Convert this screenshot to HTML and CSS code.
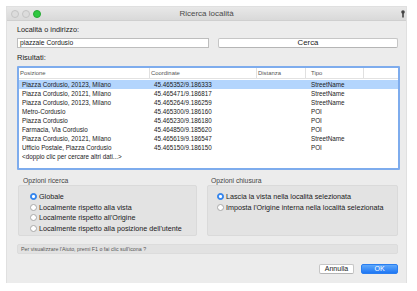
FILE: index.html
```html
<!DOCTYPE html>
<html lang="it">
<head>
    <meta charset="UTF-8">
    <meta name="viewport" content="width=device-width, initial-scale=1.0">
    <title>Ricerca località</title>
    <link rel="stylesheet" href="styles.css">
</head>
<body>

<div class="window">
    <div class="title-bar">
        <div class="lights">
            <span class="light"></span>
            <span class="light"></span>
            <span class="light green"></span>
        </div>
        <div class="title">Ricerca località</div>
        <div class="help-icon">
            <svg width="4" height="8" viewBox="0 0 4 8"><circle cx="2" cy="2" r="1.8" fill="#444"/><rect x="1.2" y="3" width="1.6" height="4.5" fill="#444"/></svg>
        </div>
    </div>

    <div class="content">
        <div class="label">Località o indirizzo:</div>
        <div class="search-row">
            <div class="input">piazzale Cordusio</div>
            <div class="button wide">Cerca</div>
        </div>

        <div class="label results-label">Risultati:</div>
        <div class="results">
            <div class="row head">
                <span>Posizione</span>
                <span>Coordinate</span>
                <span>Distanza</span>
                <span class="tipo">Tipo</span>
                <span></span>
            </div>
            <div class="rows">
                <div class="row selected"><span>Piazza Cordusio, 20123, Milano</span><span>45.465352/9.186333</span><span></span><span>StreetName</span></div>
                <div class="row"><span>Piazza Cordusio, 20121, Milano</span><span>45.465471/9.186817</span><span></span><span>StreetName</span></div>
                <div class="row"><span>Piazza Cordusio, 20123, Milano</span><span>45.465264/9.186259</span><span></span><span>StreetName</span></div>
                <div class="row"><span>Metro-Cordusio</span><span>45.465300/9.186160</span><span></span><span>POI</span></div>
                <div class="row"><span>Piazza Cordusio</span><span>45.465230/9.186180</span><span></span><span>POI</span></div>
                <div class="row"><span>Farmacia, Via Cordusio</span><span>45.464850/9.185620</span><span></span><span>POI</span></div>
                <div class="row"><span>Piazza Cordusio, 20121, Milano</span><span>45.465619/9.186547</span><span></span><span>StreetName</span></div>
                <div class="row"><span>Ufficio Postale, Piazza Cordusio</span><span>45.465150/9.186150</span><span></span><span>POI</span></div>
                <div class="row"><span>&lt;doppio clic per cercare altri dati...&gt;</span></div>
            </div>
        </div>

        <div class="options">
            <div class="group left">
                <div class="group-label">Opzioni ricerca</div>
                <div class="group-box">
                    <div class="radio-row"><span class="radio on"></span>Globale</div>
                    <div class="radio-row"><span class="radio"></span>Localmente rispetto alla vista</div>
                    <div class="radio-row"><span class="radio"></span>Localmente rispetto all'Origine</div>
                    <div class="radio-row"><span class="radio"></span>Localmente rispetto alla posizione dell'utente</div>
                </div>
            </div>
            <div class="group right">
                <div class="group-label">Opzioni chiusura</div>
                <div class="group-box">
                    <div class="radio-row"><span class="radio on"></span>Lascia la vista nella località selezionata</div>
                    <div class="radio-row"><span class="radio"></span>Imposta l'Origine interna nella località selezionata</div>
                </div>
            </div>
        </div>

        <div class="help-bar">Per visualizzare l'Aiuto, premi F1 o fai clic sull'icona ?</div>

        <div class="actions">
            <div class="button">Annulla</div>
            <div class="button primary">OK</div>
        </div>
    </div>
</div>

</body>
</html>
```

FILE: styles.css
```css
body {
    font-family: 'Liberation Sans', Arial, sans-serif;
    background-color: white;
    margin: 0;
    padding: 0;
    color: #222;
}

.window {
    margin: 7px 0 0 7px;
    width: 399px;
    height: 276px;
    background-color: #ececec;
    box-shadow: 0 0 0 1px rgba(0, 0, 0, 0.12);
}

/* Title bar */
.title-bar {
    height: 14px;
    display: grid;
    grid-template-columns: 1fr auto 1fr;
    align-items: center;
    background: linear-gradient(#e8e8e8, #d9d9d9);
    border-bottom: 1px solid #cfcfcf;
    box-sizing: border-box;
}

.lights {
    display: flex;
    gap: 3px;
    padding-left: 4px;
}

.light {
    width: 6px;
    height: 6px;
    border-radius: 50%;
    background-color: #dcdcdc;
    border: 0.5px solid #c4c4c4;
}

.light.green {
    background-color: #2fc840;
    border-color: #27a834;
}

.title {
    font-size: 8px;
    color: #4a4a4a;
}

.help-icon {
    justify-self: end;
    padding-right: 1px;
    display: flex;
}

/* Content */
.content {
    padding: 4px 8px 0 10px;
}

.label {
    font-size: 7.3px;
    line-height: 9px;
    color: #222;
}

.search-row {
    display: flex;
    gap: 9px;
    margin-top: 4px;
    height: 10px;
}

.input {
    width: 192px;
    box-sizing: border-box;
    background-color: white;
    border: 1px solid #bdbdbd;
    font-size: 6.7px;
    line-height: 8px;
    padding-left: 2px;
}

.button {
    box-sizing: border-box;
    background-color: white;
    border: 1px solid #c6c6c6;
    border-bottom-color: #b5b5b5;
    border-radius: 2px;
    font-size: 7px;
    line-height: 8px;
    text-align: center;
    height: 10px;
}

.button.wide {
    flex: 1;
    font-size: 7.8px;
}

.results-label {
    margin-top: 5px;
    font-size: 7.5px;
}

/* Results table */
.results {
    margin-top: 4px;
    margin-right: -2px;
    height: 104px;
    box-sizing: border-box;
    background-color: white;
    border: 2px solid #7eaced;
    border-radius: 1px;
}

.row {
    display: grid;
    grid-template-columns: 131px 107px 49px 58px 1fr;
    height: 9px;
    font-size: 6.3px;
    line-height: 9px;
    color: #1a1a1a;
    white-space: nowrap;
}

.row span {
    padding-left: 3px;
    overflow: hidden;
}

.row span:nth-child(2) {
    padding-left: 4px;
}

.row span:nth-child(4) {
    padding-left: 5px;
}

.row.head {
    height: 11px;
    line-height: 10px;
    font-size: 5.9px;
    color: #555;
    border-bottom: 1px solid #e2e2e2;
    box-sizing: border-box;
}

.row.head span {
    padding-left: 1px;
    border-right: 1px solid #e0e0e0;
}

.row.head span:nth-child(4) {
    padding-left: 5px;
}

.row.head span:last-child {
    border-right: none;
}

.rows {
    padding-top: 1px;
}

.row.selected {
    background-color: #b3d5fd;
}

/* Options */
.options {
    display: flex;
    gap: 10px;
    margin-top: 6px;
    padding-left: 1px;
}

.group.left {
    width: 179px;
}

.group.right {
    flex: 1;
}

.group-label {
    font-size: 6.8px;
    line-height: 9px;
    color: #444;
    padding-left: 5px;
}

.group.right .group-label {
    padding-left: 4px;
}

.group-box {
    height: 51px;
    box-sizing: border-box;
    background-color: #e3e3e3;
    border: 1px solid #dadada;
    border-radius: 2px;
    padding: 5px 0 0 11px;
}

.group.right .group-box {
    padding-left: 9px;
}

.radio-row {
    display: flex;
    align-items: center;
    gap: 2px;
    height: 10.7px;
    font-size: 7.2px;
    color: #1a1a1a;
    white-space: nowrap;
}

.radio {
    width: 7px;
    height: 7px;
    box-sizing: border-box;
    border-radius: 50%;
    background-color: white;
    border: 0.6px solid #a9a9a9;
    display: flex;
    align-items: center;
    justify-content: center;
}

.radio.on {
    background-color: #3a8cf6;
    border-color: #2f7fe6;
}

.radio.on::after {
    content: '';
    width: 2.4px;
    height: 2.4px;
    border-radius: 50%;
    background-color: white;
}

/* Help bar */
.help-bar {
    margin-top: 8px;
    height: 10px;
    box-sizing: border-box;
    background-color: #e2e2e2;
    border: 1px solid #dcdcdc;
    border-radius: 2px;
    font-size: 5.3px;
    line-height: 8px;
    color: #555;
    padding-left: 3px;
}

/* Buttons */
.actions {
    display: flex;
    justify-content: flex-end;
    gap: 7px;
    margin-top: 10px;
}

.actions .button {
    width: 35px;
}

.actions .button.primary {
    width: 37px;
    color: white;
    border: 1px solid #2a7ef0;
    background: linear-gradient(#5ea8fb, #1f77f4);
}
```
